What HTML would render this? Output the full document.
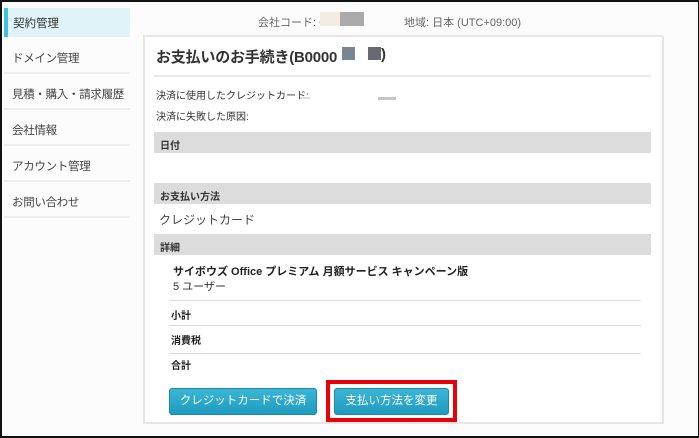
<!DOCTYPE html><html><head><meta charset="utf-8"><style>
*{margin:0;padding:0;box-sizing:border-box}
body{width:699px;height:438px;background:#fcfcfc;font-family:"Liberation Sans","Noto Sans CJK JP",sans-serif;color:#333;position:relative;overflow:hidden}
.frame{position:absolute;left:0;top:0;width:699px;height:438px;border:2px solid #111;border-right-width:1px;z-index:10;pointer-events:none}
.abs{position:absolute;white-space:nowrap}
.nav{position:absolute;left:4px;width:126px;font-size:11.5px;color:#444;padding-left:8px;border-bottom:2px solid #eee;white-space:nowrap;letter-spacing:-0.3px}
.bar{position:absolute;left:154px;width:497px;height:21px;background:#dcdcdc;font-size:10px;font-weight:bold;padding:5px 0 0 6px;color:#333}
.hr{position:absolute;left:169px;width:472px;height:1px;background:#ddd}
.lab{position:absolute;left:171px;font-size:10px;font-weight:bold;color:#222}
.btn{position:absolute;height:27px;background:linear-gradient(#3cb6d6,#1e9bc0);border:1px solid #1a89ab;border-radius:3px;color:#fff;font-size:11.5px;text-align:center;line-height:25px;white-space:nowrap}
</style></head><body>
<div class="frame"></div>
<div class="abs" style="left:4px;top:8px;width:126px;height:29px;background:#dff3f8;border-left:4px solid #3bc3e0;font-size:11.5px;padding:7px 0 0 5px;color:#333">契約管理</div>
<div class="nav" style="top:37px;height:37px;padding-top:13px">ドメイン管理</div>
<div class="nav" style="top:74px;height:36px;padding-top:12px">見積・購入・請求履歴</div>
<div class="nav" style="top:110px;height:36px;padding-top:12px">会社情報</div>
<div class="nav" style="top:146px;height:36px;padding-top:12px">アカウント管理</div>
<div class="nav" style="top:182px;height:36px;padding-top:12px">お問い合わせ</div>
<div class="abs" style="left:258px;top:14px;font-size:11px;color:#666">会社コード: C</div>
<div class="abs" style="left:320px;top:12px;width:20px;height:14px;background:#f2ece4"></div>
<div class="abs" style="left:340px;top:12px;width:24px;height:14px;background:#aaa"></div>
<div class="abs" style="left:404px;top:14px;font-size:11px;color:#666">地域: 日本 (UTC+09:00)</div>
<div class="abs" style="left:143px;top:35px;width:521px;height:389px;background:#fff;border:2px solid #e6e6e6"></div>
<div class="abs" style="left:156px;top:46px;font-size:15px;font-weight:bold;color:#333;letter-spacing:-0.2px">お支払いのお手続き(B0000</div>
<div class="abs" style="left:342px;top:47px;width:13px;height:13px;background:#7a8590"></div>
<div class="abs" style="left:368px;top:47px;width:13px;height:13px;background:#666a70"></div>
<div class="abs" style="left:381px;top:46px;font-size:15px;font-weight:bold">)</div>
<div class="abs" style="left:154px;top:75px;width:497px;height:2px;background:#e8e8e8"></div>
<div class="abs" style="left:156px;top:87px;font-size:10px;color:#333">決済に使用したクレジットカード:</div>
<div class="abs" style="left:300px;top:97px;width:10px;height:2px;background:#ddd"></div>
<div class="abs" style="left:378px;top:97px;width:18px;height:3px;background:#c4c4c4"></div>
<div class="abs" style="left:156px;top:108px;font-size:10px;color:#333">決済に失敗した原因:</div>
<div class="bar" style="top:132px">日付</div>
<div class="bar" style="top:183px">お支払い方法</div>
<div class="abs" style="left:159px;top:211px;font-size:12px;color:#444">クレジットカード</div>
<div class="bar" style="top:234px">詳細</div>
<div class="abs" style="left:173px;top:263px;font-size:11px;font-weight:bold;color:#222">サイボウズ Office プレミアム 月額サービス キャンペーン版</div>
<div class="abs" style="left:173px;top:278px;font-size:11px;color:#333">5 ユーザー</div>
<div class="hr" style="top:300px"></div>
<div class="lab" style="top:307px">小計</div>
<div class="hr" style="top:325px"></div>
<div class="lab" style="top:332px">消費税</div>
<div class="hr" style="top:353px"></div>
<div class="lab" style="top:357px">合計</div>
<div class="btn" style="left:169px;top:388px;width:148px">クレジットカードで決済</div>
<div class="btn" style="left:334px;top:388px;width:115px">支払い方法を変更</div>
<div class="abs" style="left:326px;top:380px;width:131px;height:42px;border:4px solid #e8000a"></div>
</body></html>
